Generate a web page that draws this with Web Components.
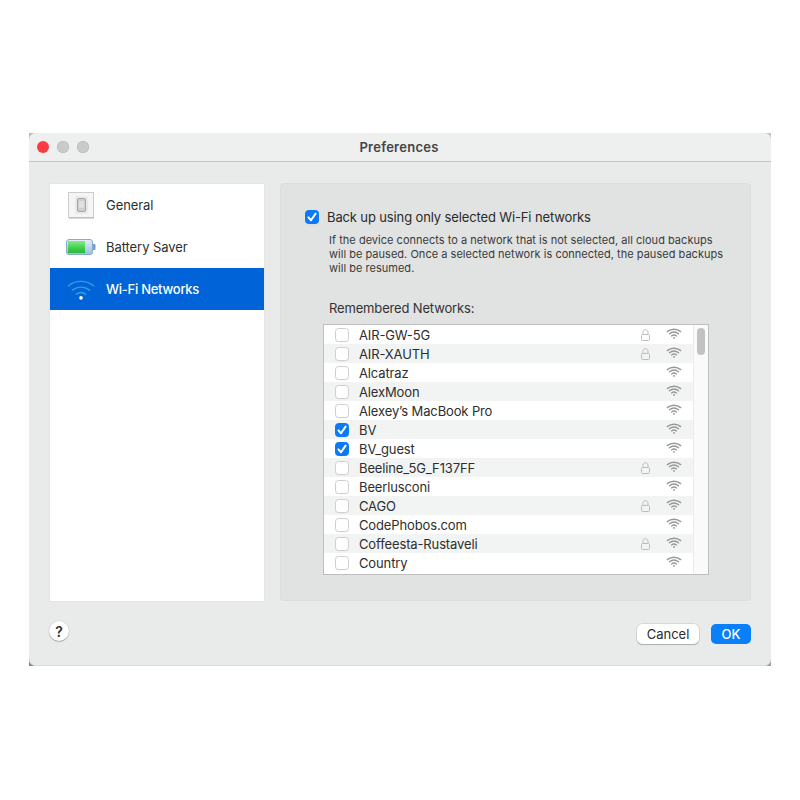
<!DOCTYPE html>
<html>
<head>
<meta charset="utf-8">
<title>Preferences</title>
<style>
  html, body { margin: 0; padding: 0; background: #fff; }
  body { font-family: Inter, "Liberation Sans", sans-serif; color: #2b2b2b; }
</style>
</head>
<body>
<pref-window>
  <pref-sidebar slot="side">
    <side-item icon="general">General</side-item>
    <side-item icon="battery">Battery Saver</side-item>
    <side-item icon="wifi" selected>Wi-Fi Networks</side-item>
  </pref-sidebar>
  <wifi-panel slot="main"></wifi-panel>
</pref-window>

<script>
(function () {
  const WIFI = `
    <path d="M1.5 4.6C6.4 .6 13.6 .6 18.5 4.6" />
    <path d="M4.2 7.4C7.6 4.7 12.4 4.7 15.8 7.4" />
    <path d="M6.9 10.1C8.8 8.7 11.2 8.7 13.1 10.1" />
    <circle cx="10" cy="12.6" r="1.2" stroke="none" fill="currentColor" />`;

  const CHECK = `<svg viewBox="0 0 14 14" width="14" height="14" fill="none" stroke="#fff" stroke-width="2" stroke-linecap="round" stroke-linejoin="round"><path d="M3.4 7.4L6 10.2 10.6 3.6" /></svg>`;

  customElements.define('check-box', class CheckBox extends HTMLElement {
    constructor() {
      super();
      this.attachShadow({ mode: 'open' });
      this.shadowRoot.innerHTML = `
        <style>
          :host { display: block; width: 14px; height: 14px; box-sizing: border-box; border-radius: 3.5px; background: #fff; border: 1px solid #cfcfcf; box-shadow: 0 .5px 0 rgba(0,0,0,.04); flex: none; }
          :host([checked]) { background: #0a7bf5; border-color: #0a7bf5; }
          svg { display: block; margin: -1px; }
        </style>
        ${this.hasAttribute('checked') ? CHECK : ''}`;
    }
  });

  customElements.define('wifi-icon', class WifiIcon extends HTMLElement {
    constructor() {
      super();
      this.attachShadow({ mode: 'open' });
      this.shadowRoot.innerHTML = `
        <style>
          :host { display: block; width: 16px; height: 11px; color: #979797; flex: none; }
          svg { display: block; width: 100%; height: 100%; }
        </style>
        <svg viewBox="0 0 20 14" fill="none" stroke="currentColor" stroke-width="1.7" stroke-linecap="round">${WIFI}</svg>`;
    }
  });

  customElements.define('lock-icon', class LockIcon extends HTMLElement {
    constructor() {
      super();
      this.attachShadow({ mode: 'open' });
      this.shadowRoot.innerHTML = `
        <style>
          :host { display: block; width: 9px; height: 12px; flex: none; }
          svg { display: block; }
        </style>
        <svg viewBox="0 0 9 12" width="9" height="12" fill="none" stroke="#bcbcbc" stroke-width="1">
          <path d="M2 5.5V3C2 0 7 0 7 3V5.5" />
          <rect x=".5" y="5.5" width="8" height="6" rx="1" />
        </svg>`;
    }
  });

  customElements.define('network-row', class NetworkRow extends HTMLElement {
    constructor() {
      super();
      this.attachShadow({ mode: 'open' });
      const checked = this.hasAttribute('checked') ? 'checked' : '';
      const lock = this.hasAttribute('locked') ? '<lock-icon></lock-icon>' : '';
      this.shadowRoot.innerHTML = `
        <style>
          :host { display: flex; align-items: center; height: 19px; padding-left: 11px; font-size: 13px; color: #2e2e2e; background: #fff; }
          :host([alt]) { background: #f2f4f3; }
          .name { margin-left: 10px; flex: 1; white-space: nowrap; letter-spacing: -.01em; }
          .lock { width: 9px; margin-right: 16px; }
          wifi-icon { margin: 0 11px 2px 0; }
        </style>
        <check-box ${checked}></check-box>
        <span class="name"><slot></slot></span>
        <span class="lock">${lock}</span>
        <wifi-icon></wifi-icon>`;
    }
  });

  const networks = [
    ['AIR-GW-5G', 'l'], ['AIR-XAUTH', 'l'], ['Alcatraz', ''], ['AlexMoon', ''],
    ['Alexey\u2019s MacBook Pro', ''], ['BV', 'c'], ['BV_guest', 'c'],
    ['Beeline_5G_F137FF', 'l'], ['Beerlusconi', ''], ['CAGO', 'l'],
    ['CodePhobos.com', ''], ['Coffeesta-Rustaveli', 'l'], ['Country', '']
  ];

  customElements.define('network-list', class NetworkList extends HTMLElement {
    constructor() {
      super();
      this.attachShadow({ mode: 'open' });
      const rows = networks.map((n, i) =>
        `<network-row ${i % 2 ? 'alt' : ''} ${n[1] === 'l' ? 'locked' : ''} ${n[1] === 'c' ? 'checked' : ''}>${n[0]}</network-row>`).join('');
      this.shadowRoot.innerHTML = `
        <style>
          :host { display: flex; box-sizing: border-box; width: 386px; height: 251px; margin-left: 42px; background: #fff; border: 1px solid #bdbebd; }
          .rows { flex: 1; overflow: hidden; }
          .bar { width: 15px; box-sizing: border-box; background: #fafafa; border-left: 1px solid #ececec; padding: 3px 3px 0 3px; }
          .thumb { height: 27px; width: 8px; border-radius: 4px; background: #c2c2c2; }
        </style>
        <div class="rows">${rows}</div>
        <div class="bar"><div class="thumb"></div></div>`;
    }
  });

  customElements.define('wifi-panel', class WifiPanel extends HTMLElement {
    constructor() {
      super();
      this.attachShadow({ mode: 'open' });
      this.shadowRoot.innerHTML = `
        <style>
          :host { display: block; box-sizing: border-box; width: 471px; height: 418px; background: #e1e3e2; border: 1px solid #dcdddc; border-radius: 4px; padding-top: 25px; }
          .head { display: flex; align-items: center; gap: 8px; margin-left: 24px; font-size: 13px; line-height: 16px; color: #2a2a2a; letter-spacing: -.01em; }
          .note { margin: 8px 0 0 48px; width: 400px; font-size: 11px; line-height: 14px; color: #3a3a3a; letter-spacing: .002em; }
          .label { margin: 25px 0 8px 48px; font-size: 13px; line-height: 16px; color: #333; letter-spacing: -.012em; }
        </style>
        <div class="head"><check-box checked></check-box><span>Back up using only selected Wi-Fi networks</span></div>
        <div class="note">If the device connects to a network that is not selected, all cloud backups will be paused. Once a selected network is connected, the paused backups will be resumed.</div>
        <div class="label">Remembered Networks:</div>
        <network-list></network-list>`;
    }
  });

  customElements.define('side-item', class SideItem extends HTMLElement {
    constructor() {
      super();
      this.attachShadow({ mode: 'open' });
      const icons = {
        general: `
          <svg width="30" height="28" viewBox="0 0 30 28">
            <rect x="2.5" y="1.5" width="25" height="25" fill="#f5f5f5" stroke="#cdcdcd" />
            <path d="M3 27h25" stroke="#b4b4b4" />
            <rect x="9" y="5" width="13" height="18" rx="2" fill="#e9e9e9" />
            <rect x="11.5" y="7.5" width="8" height="13" rx="1.5" fill="#cfcfcf" stroke="#a6a6a6" />
            <rect x="13" y="10" width="5" height="7" fill="#e0e0e0" />
          </svg>`,
        battery: `
          <svg width="30" height="18" viewBox="0 0 30 18">
            <defs>
              <linearGradient id="body" x1="0" y1="0" x2="0" y2="1"><stop offset="0" stop-color="#e6eef8" /><stop offset="1" stop-color="#9dbde2" /></linearGradient>
              <linearGradient id="fill" x1="0" y1="0" x2="0" y2="1"><stop offset="0" stop-color="#86ea86" /><stop offset=".6" stop-color="#3fcf4c" /><stop offset="1" stop-color="#2fb53e" /></linearGradient>
            </defs>
            <rect x="26.5" y="6" width="3" height="6" rx="1" fill="#6f9fd0" />
            <rect x=".5" y="1.5" width="26" height="15" rx="2.5" fill="url(#body)" stroke="#86a9d0" />
            <rect x="2" y="3" width="17" height="12" fill="url(#fill)" />
          </svg>`,
        wifi: `
          <svg width="30" height="21" viewBox="0 0 20 14" fill="none" stroke="#2aa3dc" stroke-width=".9" stroke-linecap="round">${WIFI}</svg>`
      };
      this.shadowRoot.innerHTML = `
        <style>
          :host { display: flex; align-items: center; height: 42px; font-size: 13px; color: #2e2e2e; letter-spacing: -.005em; }
          :host([selected]) { background: #0064d8; color: #fff; font-weight: 500; letter-spacing: -.02em; }
          .icon { width: 56px; flex: none; padding-left: 16px; box-sizing: border-box; }
          svg { display: block; }
        </style>
        <span class="icon">${icons[this.getAttribute('icon')]}</span>
        <slot></slot>`;
    }
  });

  customElements.define('pref-sidebar', class PrefSidebar extends HTMLElement {
    constructor() {
      super();
      this.attachShadow({ mode: 'open' });
      this.shadowRoot.innerHTML = `
        <style>
          :host { display: block; box-sizing: border-box; width: 214px; height: 417px; margin-top: 1px; background: #fff; box-shadow: 0 0 0 1px #e4e5e4; }
        </style>
        <slot></slot>`;
    }
  });

  customElements.define('push-button', class PushButton extends HTMLElement {
    constructor() {
      super();
      this.attachShadow({ mode: 'open' });
      this.shadowRoot.innerHTML = `
        <style>
          :host { display: flex; align-items: center; justify-content: center; box-sizing: border-box; height: 20px; width: 62px; padding-bottom: 1px; background: #fff; border-radius: 5px; font-size: 13px; color: #2b2b2b; box-shadow: 0 0 0 .5px rgba(0,0,0,.16), 0 1px 1px rgba(0,0,0,.2); }
          :host([primary]) { width: 40px; background: #0a7ffa; color: #fff; box-shadow: none; font-weight: 500; }
        </style>
        <slot></slot>`;
    }
  });

  customElements.define('pref-window', class PrefWindow extends HTMLElement {
    constructor() {
      super();
      this.attachShadow({ mode: 'open' });
      this.shadowRoot.innerHTML = `
        <style>
          /* the desktop shows through behind the rounded corners */
          :host {
            display: block; width: 742px; height: 533px; margin: 133px 0 0 29px;
            background:
              linear-gradient(#b3bbc6, #b3bbc6) left top / 8px 8px no-repeat,
              linear-gradient(#c4c4c4, #c4c4c4) right top / 8px 8px no-repeat,
              linear-gradient(#7f8a96, #7f8a96) left bottom / 8px 8px no-repeat,
              linear-gradient(#9d9d9d, #9d9d9d) right bottom / 8px 8px no-repeat;
          }
          .frame { height: 100%; background: #e9eaea; border-radius: 7px; overflow: hidden; box-shadow: inset 0 -1px 0 #dcdcdc; }
          .title { display: flex; align-items: center; position: relative; box-sizing: border-box; height: 29px; padding: 0 2px 1px 0; background: #eeefef; border-bottom: 1px solid #c3c4c3; justify-content: center; font-size: 13px; font-weight: 600; color: #444; letter-spacing: .02em; }
          .lights { position: absolute; left: 8px; top: 8px; display: flex; gap: 8px; }
          .lights i { width: 12px; height: 12px; border-radius: 50%; background: #c9cac9; box-shadow: inset 0 0 0 .5px #b4b5b4; }
          .lights i:first-child { background: #fc3c41; box-shadow: none; }
          .body { display: flex; gap: 16px; padding: 21px 0 0 21px; align-items: flex-start; }
          .foot { display: flex; align-items: center; padding: 0 20px; margin-top: 23px; gap: 12px; }
          .help { width: 20px; height: 20px; border-radius: 50%; background: #fff; box-shadow: 0 0 0 .5px rgba(0,0,0,.12), 0 1px 1px rgba(0,0,0,.22); display: flex; align-items: center; justify-content: center; font-size: 14px; font-weight: 600; color: #333; margin-top: -6px; margin-right: auto; }
        </style>
        <div class="frame">
          <div class="title">
            <div class="lights"><i></i><i></i><i></i></div>
            Preferences
          </div>
          <div class="body">
            <slot name="side"></slot>
            <slot name="main"></slot>
          </div>
          <div class="foot">
            <div class="help">?</div>
            <push-button>Cancel</push-button>
            <push-button primary>OK</push-button>
          </div>
        </div>`;
    }
  });
})();
</script>
</body>
</html>
